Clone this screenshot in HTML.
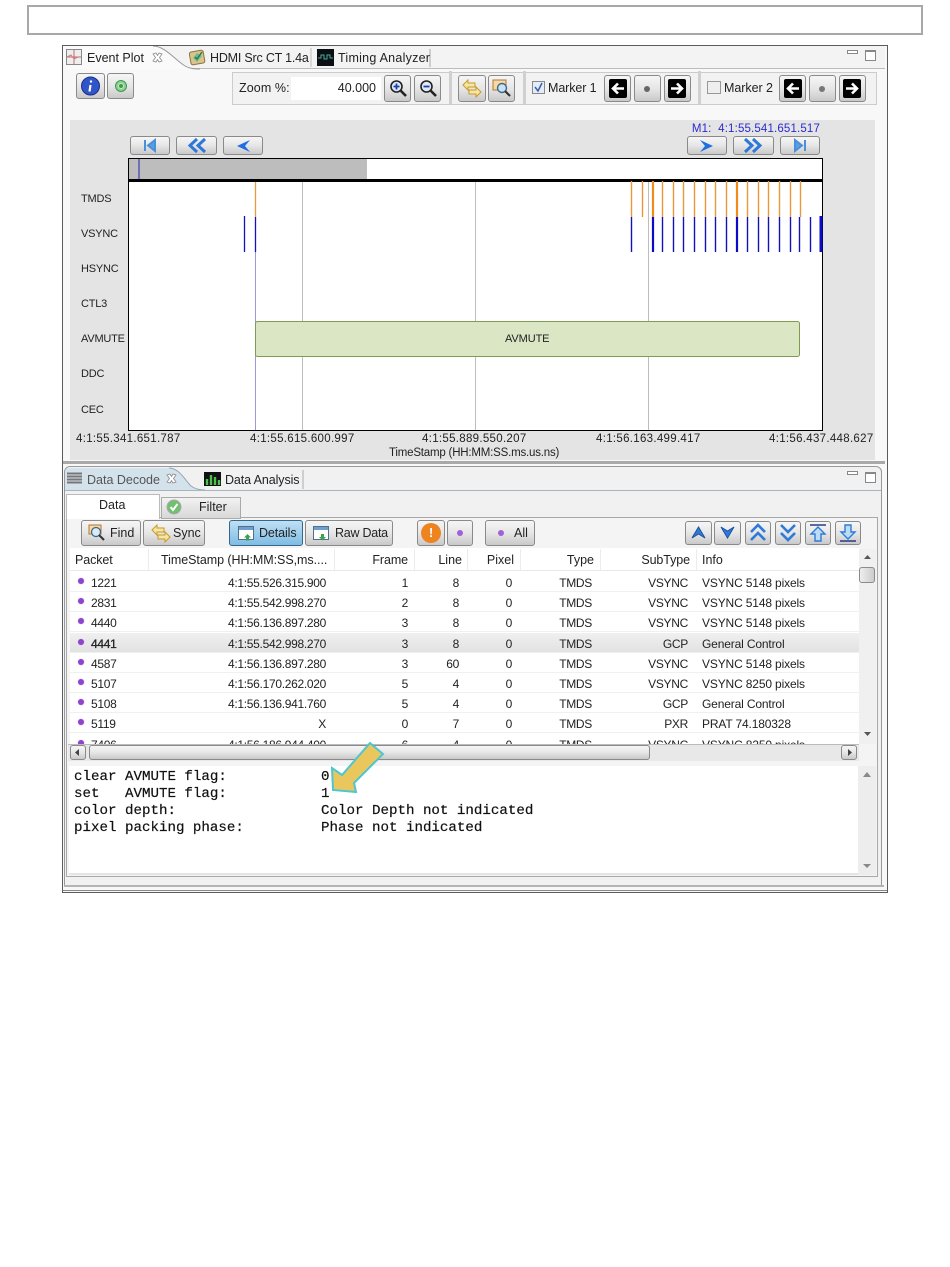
<!DOCTYPE html>
<html><head><meta charset="utf-8"><style>
html,body{margin:0;padding:0;background:#fff}
#p{position:relative;width:950px;height:1267px;overflow:hidden;font:12.5px "Liberation Sans",sans-serif;color:#222;background:#fff}
#p div,#p span,#p svg{position:absolute}
.t{white-space:nowrap;line-height:16px;height:16px}
.b{box-sizing:border-box;border:1px solid #8a8a8a;border-radius:3px;background:linear-gradient(#f6f6f6,#e6e6e6 50%,#c9c9c9)}
.ax{font-size:11.5px;letter-spacing:.3px;top:431px}
.yl{font-size:11px;left:81px;letter-spacing:-.2px}
.r{left:70px;width:789px;height:20.2px;border-bottom:1px solid #eef0f2;box-sizing:border-box;line-height:20px;white-space:nowrap;font-size:12px;letter-spacing:-.3px}
.r span{top:3px;line-height:16px}
.d{left:8px;top:6px!important;width:6px;height:6px;border-radius:50%;background:#8e44d0;box-shadow:0 0 1px #a8c}
.n{left:21px}.a{right:533px}.f{right:451px}.l{right:400px}.x{right:347px}.y{right:267px}.s{right:171px}.i{left:632px;letter-spacing:-.15px}
.sel{background:linear-gradient(#f0f0f0,#e2e2e2)}
.h{top:552px}
.m{font:14.17px/17px "Liberation Mono",monospace;color:#111;white-space:pre;-webkit-text-stroke:.2px #111}
.sep{top:71px;height:33px;width:3px;background:#d0d0d0}
.v{top:549px;width:1px;height:21px;background:#ececec}
</style></head><body><div id="p">
<div style="left:27px;top:5px;width:892px;height:26px;border:2px solid #a8a8a8"></div>

<div style="left:62px;top:45px;width:824px;height:846px;border:1px solid #5c5c5c;background:#f8f8f8"></div>
<div style="left:63px;top:46px;width:822px;height:22px;background:#f3f3f3;border-bottom:1px solid #bbb"></div>
<svg style="left:63px;top:46px" width="380" height="24"><path d="M0 0H90C102 0 112 14 122 20C127 23 132 23 137 23H0Z" fill="#fafafa"/><path d="M90 0C102 0 112 14 122 20C127 23 132 23 137 23" fill="none" stroke="#999"/><path d="M367 3V21" stroke="#aaa"/><path d="M248 2V21" stroke="#bbb"/></svg>
<svg style="left:66px;top:49px" width="17" height="17"><rect x=".5" y=".5" width="15" height="15" fill="#eee" stroke="#888"/><path d="M1 8H15M8 1V15" stroke="#c66"/><path d="M1 8L5 6L8 10L12 8" fill="none" stroke="#b88"/></svg>
<span class="t" style="left:87px;top:50px">Event Plot</span>
<svg style="left:152px;top:52px" width="11" height="11"><path d="M1 2L4 1L5.500 3.500L7 1L10 2L7.500 5.500L10 9L7 10L5.500 7.500L4 10L1 9L3.500 5.500Z" fill="#fff" stroke="#888" stroke-width=".8"/></svg>
<svg style="left:188px;top:49px" width="19" height="17"><rect x="2" y="2" width="14" height="13" rx="2" fill="#d9c58a" stroke="#8a7440" transform="rotate(-10 9 8)"/><path d="M5 9L9 4L14 7L9 13Z" fill="#6fb8a0"/><path d="M7 8L9 10L14 3" fill="none" stroke="#2b7d3a" stroke-width="1.500"/></svg>
<span class="t" style="left:210px;top:50px;letter-spacing:-.2px">HDMI Src CT 1.4a</span>
<div style="left:317px;top:49px;width:17px;height:17px;background:#0a0f14"></div>
<svg style="left:317px;top:49px" width="17" height="17"><path d="M1 9H4V6H7V10H10V6H13V9H16" fill="none" stroke="#4fa7a0"/></svg>
<span class="t" style="left:338px;top:50px;letter-spacing:.25px">Timing Analyzer</span>
<div style="left:847px;top:50px;width:9px;height:2px;border:1px solid #888;background:#fff"></div>
<div style="left:865px;top:50px;width:9px;height:8px;border:1px solid #888;border-top-width:2px;background:#fff"></div>

<div class="b" style="left:76px;top:73px;width:29px;height:26px"></div>
<svg style="left:80px;top:76px" width="21" height="20"><ellipse cx="10.500" cy="10" rx="9" ry="9" fill="#2f55c8" stroke="#1b2f86"/><path d="M11 4.500V6.500M10.500 9L9.500 15.500" stroke="#fff" stroke-width="2.200"/></svg>
<div class="b" style="left:107px;top:73px;width:27px;height:26px"></div>
<svg style="left:114px;top:79px" width="14" height="14"><circle cx="7" cy="7" r="5.500" fill="#8fcf8f" stroke="#3f9a4f"/><circle cx="7" cy="7" r="2.500" fill="#3f9a4f" stroke="#c6e8c6"/></svg>

<div style="left:232px;top:72px;width:643px;height:31px;border:1px solid #ccc;background:#f2f2f2"></div>
<span class="t" style="left:239px;top:80px;letter-spacing:.1px">Zoom %:</span>
<div style="left:291px;top:77px;width:90px;height:23px;background:#fff"></div>
<span class="t" style="right:574px;top:80px">40.000</span>
<div class="b" style="left:384px;top:75px;width:27px;height:27px"></div>
<svg style="left:388px;top:78px" width="20" height="20"><circle cx="8.500" cy="8.500" r="5.500" fill="#dfe9f6" stroke="#222" stroke-width="1.600"/><path d="M12.500 12.500L18 18" stroke="#222" stroke-width="2.600"/><path d="M5.500 8.500H11.500M8.500 5.500V11.500" stroke="#1c3cb0" stroke-width="1.800"/></svg>
<div class="b" style="left:414px;top:75px;width:27px;height:27px"></div>
<svg style="left:418px;top:78px" width="20" height="20"><circle cx="8.500" cy="8.500" r="5.500" fill="#dfe9f6" stroke="#222" stroke-width="1.600"/><path d="M12.500 12.500L18 18" stroke="#222" stroke-width="2.600"/><path d="M5.500 8.500H11.500" stroke="#1c3cb0" stroke-width="1.800"/></svg>
<div class="sep" style="left:449px"></div>
<div class="b" style="left:458px;top:75px;width:28px;height:27px"></div>
<svg style="left:462px;top:79px" width="20" height="20"><path d="M1 6L6 1V4H13V8H6V11Z" fill="#f7e6a0" stroke="#c89a2a"/><path d="M19 13L14 8V11H7V15H14V18Z" fill="#f7e6a0" stroke="#c89a2a"/></svg>
<div class="b" style="left:488px;top:75px;width:27px;height:27px"></div>
<svg style="left:492px;top:78px" width="20" height="20"><rect x="1" y="2" width="13" height="10" fill="#f6d9a8" stroke="#b8742a"/><circle cx="10" cy="10" r="4.500" fill="#c9e2f4" stroke="#3a6a8a" stroke-width="1.400"/><path d="M13 13L18 18" stroke="#333" stroke-width="2.200"/></svg>
<div class="sep" style="left:523px"></div>
<div style="left:532px;top:81px;width:11px;height:11px;border:1px solid #888;background:#e4ecf8"></div>
<svg style="left:533px;top:82px" width="11" height="11"><path d="M2 5L5 9L9 1" fill="none" stroke="#3a5ea8" stroke-width="1.500"/></svg>
<span class="t" style="left:548px;top:80px;letter-spacing:-.1px">Marker 1</span>
<div class="b" style="left:604px;top:75px;width:27px;height:27px"></div>
<div style="left:609px;top:79px;width:18px;height:19px;background:#000;border-radius:2px"></div>
<svg style="left:609px;top:79px" width="18" height="19"><path d="M15 9.500H5M9 4.500L4 9.500L9 14.500" fill="none" stroke="#fff" stroke-width="2.600"/></svg>
<div class="b" style="left:634px;top:75px;width:27px;height:27px"></div>
<div style="left:644px;top:86px;width:6px;height:6px;border-radius:50%;background:#666"></div>
<div class="b" style="left:664px;top:75px;width:27px;height:27px"></div>
<div style="left:668px;top:79px;width:18px;height:19px;background:#000;border-radius:2px"></div>
<svg style="left:668px;top:79px" width="18" height="19"><path d="M3 9.500H13M9 4.500L14 9.500L9 14.500" fill="none" stroke="#fff" stroke-width="2.600"/></svg>
<div class="sep" style="left:698px"></div>
<div style="left:707px;top:81px;width:12px;height:11px;border:1px solid #999;background:#eee"></div>
<span class="t" style="left:724px;top:80px;letter-spacing:-.05px">Marker 2</span>
<div class="b" style="left:779px;top:75px;width:27px;height:27px"></div>
<div style="left:784px;top:79px;width:18px;height:19px;background:#000;border-radius:2px"></div>
<svg style="left:784px;top:79px" width="18" height="19"><path d="M15 9.500H5M9 4.500L4 9.500L9 14.500" fill="none" stroke="#fff" stroke-width="2.600"/></svg>
<div class="b" style="left:809px;top:75px;width:27px;height:27px"></div>
<div style="left:819px;top:86px;width:6px;height:6px;border-radius:50%;background:#777"></div>
<div class="b" style="left:839px;top:75px;width:27px;height:27px"></div>
<div style="left:843px;top:79px;width:18px;height:19px;background:#000;border-radius:2px"></div>
<svg style="left:843px;top:79px" width="18" height="19"><path d="M3 9.500H13M9 4.500L14 9.500L9 14.500" fill="none" stroke="#fff" stroke-width="2.600"/></svg>

<div style="left:70px;top:120px;width:805px;height:340px;background:#e4e4e4"></div>
<div style="left:63px;top:461px;width:822px;height:3px;background:#a9a9a9"></div>
<span class="t" style="right:130px;top:121px;font-size:11.5px;color:#2a2ad0;letter-spacing:.15px">M1:&nbsp; 4:1:55.541.651.517</span>

<div class="b" style="left:130px;top:136px;width:40px;height:19px"></div>
<svg style="left:130px;top:136px" width="40" height="19"><path d="M15 4V15M25 4L18 9.500L25 15V4Z" stroke="#4b8fd8" stroke-width="2" fill="#5a9fe0"/></svg>
<div class="b" style="left:176px;top:136px;width:41px;height:19px"></div>
<svg style="left:176px;top:136px" width="41" height="19"><path d="M21 3L14 9.500L21 16M29 3L22 9.500L29 16" fill="none" stroke="#2d78d8" stroke-width="3"/></svg>
<div class="b" style="left:223px;top:136px;width:40px;height:19px"></div>
<svg style="left:223px;top:136px" width="40" height="19"><path d="M27 4L14 10L27 16L22 10Z" fill="#1f6fe0"/></svg>
<div class="b" style="left:687px;top:136px;width:40px;height:19px"></div>
<svg style="left:687px;top:136px" width="40" height="19"><path d="M13 4L26 10L13 16L18 10Z" fill="#1f6fe0"/></svg>
<div class="b" style="left:733px;top:136px;width:41px;height:19px"></div>
<svg style="left:733px;top:136px" width="41" height="19"><path d="M12 3L19 9.500L12 16M20 3L27 9.500L20 16" fill="none" stroke="#2d78d8" stroke-width="3"/></svg>
<div class="b" style="left:780px;top:136px;width:40px;height:19px"></div>
<svg style="left:780px;top:136px" width="40" height="19"><path d="M25 4V15M15 4L22 9.500L15 15V4Z" stroke="#4b8fd8" stroke-width="2" fill="#5a9fe0"/></svg>

<svg style="left:0;top:0" width="950" height="440">
<rect x="128.500" y="158.500" width="694" height="272" fill="#fff" stroke="#000"/>
<rect x="129" y="159" width="238" height="20" fill="#bdbdbd"/>
<path d="M139 159V179" stroke="#2323b0"/>
<rect x="129" y="179" width="693" height="3" fill="#000"/>
<path d="M302.500 182V430M475.500 182V430M648.500 182V430" stroke="#bdbdbd"/>
<path d="M255.500 182V217" stroke="#e89a40" stroke-width="1.300"/>
<path d="M255.500 217V252M244.500 216V252" stroke="#1212b8" stroke-width="1.300"/>
<path d="M255.500 252V430" stroke="#9a9ad8"/>
<path d="M631.500 181V217M642.500 181V217M662.500 181V217M673.500 181V217M683.500 181V217M694.500 181V217M705.500 181V217M715.500 181V217M726.500 181V217M747.500 181V217M758.500 181V217M768.500 181V217M779.500 181V217M790.500 181V217M800.500 181V217" stroke="#e8983a" stroke-width="1.400"/>
<path d="M653 181V217M737 181V217" stroke="#f08a1c" stroke-width="2.200"/>
<path d="M631.500 217V252M662.500 217V252M673.500 217V252M683.500 217V252M694.500 217V252M705.500 217V252M715.500 217V252M726.500 217V252M747.500 217V252M758.500 217V252M768.500 217V252M779.500 217V252M790.500 217V252M799.500 217V252M810.500 217V252" stroke="#1212b8" stroke-width="1.400"/>
<path d="M653 217V252M737 217V252" stroke="#0c0cc8" stroke-width="2.200"/>
<path d="M821 216V252" stroke="#0c0cc8" stroke-width="3"/>
<rect x="255.500" y="321.500" width="544" height="35" rx="2" fill="#dbe6c5" stroke="#7f9c50"/>
</svg>
<span class="t" style="left:505px;top:331px;font-size:11px;letter-spacing:-.1px">AVMUTE</span>
<span class="t yl" style="top:191px">TMDS</span>
<span class="t yl" style="top:226px">VSYNC</span>
<span class="t yl" style="top:261px">HSYNC</span>
<span class="t yl" style="top:296px">CTL3</span>
<span class="t yl" style="top:331px">AVMUTE</span>
<span class="t yl" style="top:366px">DDC</span>
<span class="t yl" style="top:402px">CEC</span>
<span class="t ax" style="left:76px">4:1:55.341.651.787</span>
<span class="t ax" style="left:250px">4:1:55.615.600.997</span>
<span class="t ax" style="left:422px">4:1:55.889.550.207</span>
<span class="t ax" style="left:596px">4:1:56.163.499.417</span>
<span class="t ax" style="left:769px">4:1:56.437.448.627</span>
<span class="t" style="left:389px;top:445px;font-size:11.5px;letter-spacing:-.2px">TimeStamp (HH:MM:SS.ms.us.ns)</span>

<div style="left:64px;top:466px;width:818px;height:420px;border:1px solid #999;box-sizing:border-box;border-radius:6px 6px 0 0;background:#f1f1f1"></div>
<svg style="left:65px;top:467px" width="245" height="24"><path d="M0 22V6Q0 1 6 1H104C114 1 120 13 126 19C130 22 134 23 140 23H0Z" fill="#d4e2ec"/><path d="M104 1C114 1 120 13 126 19C130 22 134 23 140 23" fill="none" stroke="#92a8b8"/><path d="M238 3V22" stroke="#aaa"/></svg>
<div style="left:65px;top:490px;width:816px;height:1px;background:#a9b4bc"></div>
<svg style="left:67px;top:472px" width="16" height="14"><path d="M0 1.500H15M0 4.500H15M0 7.500H15M0 10.500H15" stroke="#777" stroke-width="2"/></svg>
<span class="t" style="left:87px;top:472px;color:#555">Data Decode</span>
<svg style="left:166px;top:473px" width="11" height="11"><path d="M1 2L4 1L5.500 3.500L7 1L10 2L7.500 5.500L10 9L7 10L5.500 7.500L4 10L1 9L3.500 5.500Z" fill="#fff" stroke="#888" stroke-width=".8"/></svg>
<svg style="left:204px;top:472px" width="17" height="14"><rect width="17" height="14" fill="#111"/><path d="M3 13V7M7 13V3M11 13V5M15 13V8" stroke="#4ec04e" stroke-width="2.400"/></svg>
<span class="t" style="left:225px;top:472px;letter-spacing:-.1px">Data Analysis</span>
<div style="left:847px;top:471px;width:9px;height:2px;border:1px solid #888;background:#fff"></div>
<div style="left:865px;top:472px;width:9px;height:8px;border:1px solid #888;border-top-width:2px;background:#fff"></div>

<div style="left:66px;top:517px;width:810px;height:358px;border:1px solid #a8a8a8;background:#f4f4f4"></div>
<div style="left:161px;top:497px;width:78px;height:20px;border:1px solid #aaa;box-sizing:content-box;background:linear-gradient(#f2f2f2,#d8d8d8)"></div>
<div style="left:66px;top:494px;width:94px;height:25px;background:#fff;border:1px solid #bbb;border-bottom:0;box-sizing:border-box"></div>
<span class="t" style="left:99px;top:497px">Data</span>
<svg style="left:166px;top:499px" width="16" height="16"><circle cx="8" cy="8" r="7" fill="#6fc06f" stroke="#aaa"/><path d="M4.500 8L7 11L11.500 5" fill="none" stroke="#fff" stroke-width="2"/></svg>
<span class="t" style="left:199px;top:499px">Filter</span>

<div class="b" style="left:81px;top:520px;width:60px;height:26px"></div>
<svg style="left:88px;top:524px" width="18" height="18"><rect x="1" y="1" width="12" height="9" fill="#f6d9a8" stroke="#b8742a"/><circle cx="8" cy="8" r="4.500" fill="#dceaf4" stroke="#3a6a8a" stroke-width="1.300"/><path d="M11 11L16 16" stroke="#333" stroke-width="2"/></svg>
<span class="t" style="left:110px;top:525px">Find</span>
<div class="b" style="left:143px;top:520px;width:62px;height:26px"></div>
<svg style="left:151px;top:524px" width="20" height="19"><path d="M1 6L6 1V4H13V8H6V11Z" fill="#f7e6a0" stroke="#c89a2a"/><path d="M19 13L14 8V11H7V15H14V18Z" fill="#f7e6a0" stroke="#c89a2a"/></svg>
<span class="t" style="left:173px;top:525px">Sync</span>
<div class="b" style="left:229px;top:520px;width:74px;height:26px;background:linear-gradient(#bfe0f4,#7fbce4);border-color:#36668a"></div>
<svg style="left:238px;top:526px" width="18" height="16"><rect x=".5" y=".5" width="15" height="13" fill="#fff" stroke="#50708c"/><rect x="1" y="1" width="14" height="3" fill="#6f9fd0"/><path d="M9.500 8L13 11.500H11V14.500H8V11.500H6Z" fill="#3fa04f"/></svg>
<span class="t" style="left:259px;top:525px;letter-spacing:-.1px">Details</span>
<div class="b" style="left:305px;top:520px;width:88px;height:26px"></div>
<svg style="left:313px;top:526px" width="18" height="16"><rect x=".5" y=".5" width="15" height="13" fill="#fff" stroke="#50708c"/><rect x="1" y="1" width="14" height="3" fill="#6f9fd0"/><path d="M8 8H11V11H13L9.500 14.500L6 11H8Z" fill="#3fa04f"/></svg>
<span class="t" style="left:335px;top:525px;letter-spacing:-.25px">Raw Data</span>
<div class="b" style="left:417px;top:520px;width:28px;height:26px"></div>
<div style="left:421px;top:523px;width:20px;height:20px;border-radius:50%;background:#ee8420"></div>
<span class="t" style="left:429px;top:525px;color:#fff;font-weight:bold">!</span>
<div class="b" style="left:447px;top:520px;width:26px;height:26px"></div>
<div style="left:457px;top:530px;width:6px;height:6px;border-radius:50%;background:#a060d8"></div>
<div class="b" style="left:485px;top:520px;width:50px;height:26px"></div>
<div style="left:498px;top:530px;width:6px;height:6px;border-radius:50%;background:#a060d8"></div>
<span class="t" style="left:514px;top:525px">All</span>

<div class="b" style="left:685px;top:521px;width:27px;height:24px"></div>
<svg style="left:685px;top:521px" width="27" height="24"><path d="M7 17L13.500 6L20 17L13.500 13Z" fill="#2e7ad8" stroke="#1e50a0"/></svg>
<div class="b" style="left:714px;top:521px;width:27px;height:24px"></div>
<svg style="left:714px;top:521px" width="27" height="24"><path d="M7 6L13.500 17L20 6L13.500 10Z" fill="#2e7ad8" stroke="#1e50a0"/></svg>
<div class="b" style="left:745px;top:521px;width:26px;height:24px"></div>
<svg style="left:745px;top:521px" width="26" height="24"><path d="M6 11L13 4L20 11M6 19L13 12L20 19" fill="none" stroke="#2e7ad8" stroke-width="2.600"/></svg>
<div class="b" style="left:775px;top:521px;width:26px;height:24px"></div>
<svg style="left:775px;top:521px" width="26" height="24"><path d="M6 4L13 11L20 4M6 12L13 19L20 12" fill="none" stroke="#2e7ad8" stroke-width="2.600"/></svg>
<div class="b" style="left:805px;top:521px;width:26px;height:24px"></div>
<svg style="left:805px;top:521px" width="26" height="24"><path d="M5 4H21" stroke="#1a2f80" stroke-width="1.400"/><path d="M13 6L20 13H16V20H10V13H6Z" fill="#bcdcf6" stroke="#2e7ad8" stroke-width="1.400"/></svg>
<div class="b" style="left:835px;top:521px;width:26px;height:24px"></div>
<svg style="left:835px;top:521px" width="26" height="24"><path d="M5 20H21" stroke="#1a2f80" stroke-width="1.400"/><path d="M13 18L20 11H16V4H10V11H6Z" fill="#bcdcf6" stroke="#2e7ad8" stroke-width="1.400"/></svg>

<div style="left:70px;top:548px;width:789px;height:196px;background:#fff"></div>
<div class="v" style="left:148px"></div><div class="v" style="left:334px"></div><div class="v" style="left:414px"></div><div class="v" style="left:467px"></div><div class="v" style="left:520px"></div><div class="v" style="left:600px"></div><div class="v" style="left:696px"></div>
<div style="left:70px;top:570px;width:789px;height:1px;background:#e8e8e8"></div>
<span class="t h" style="left:75px;letter-spacing:-.1px">Packet</span>
<span class="t h" style="left:161px;letter-spacing:-.05px">TimeStamp (HH:MM:SS,ms....</span>
<span class="t h" style="right:542px;letter-spacing:-.1px">Frame</span>
<span class="t h" style="right:488px">Line</span>
<span class="t h" style="right:436px">Pixel</span>
<span class="t h" style="right:356px">Type</span>
<span class="t h" style="right:260px;letter-spacing:-.1px">SubType</span>
<span class="t h" style="left:702px">Info</span>

<div style="left:70px;top:571px;width:789px;height:173px;overflow:hidden">
<div class="r" style="left:0;top:1px"><span class="d"></span><span class="n">1221</span><span class="a">4:1:55.526.315.900</span><span class="f">1</span><span class="l">8</span><span class="x">0</span><span class="y">TMDS</span><span class="s">VSYNC</span><span class="i">VSYNC 5148 pixels</span></div>
<div class="r" style="left:0;top:21px"><span class="d"></span><span class="n">2831</span><span class="a">4:1:55.542.998.270</span><span class="f">2</span><span class="l">8</span><span class="x">0</span><span class="y">TMDS</span><span class="s">VSYNC</span><span class="i">VSYNC 5148 pixels</span></div>
<div class="r" style="left:0;top:41px"><span class="d"></span><span class="n">4440</span><span class="a">4:1:56.136.897.280</span><span class="f">3</span><span class="l">8</span><span class="x">0</span><span class="y">TMDS</span><span class="s">VSYNC</span><span class="i">VSYNC 5148 pixels</span></div>
<div class="r sel" style="left:0;top:62px"><span class="d"></span><span class="n"><b style="font-weight:normal;-webkit-text-stroke:.3px #222">4441</b></span><span class="a">4:1:55.542.998.270</span><span class="f">3</span><span class="l">8</span><span class="x">0</span><span class="y">TMDS</span><span class="s">GCP</span><span class="i">General Control</span></div>
<div class="r" style="left:0;top:82px"><span class="d"></span><span class="n">4587</span><span class="a">4:1:56.136.897.280</span><span class="f">3</span><span class="l">60</span><span class="x">0</span><span class="y">TMDS</span><span class="s">VSYNC</span><span class="i">VSYNC 5148 pixels</span></div>
<div class="r" style="left:0;top:102px"><span class="d"></span><span class="n">5107</span><span class="a">4:1:56.170.262.020</span><span class="f">5</span><span class="l">4</span><span class="x">0</span><span class="y">TMDS</span><span class="s">VSYNC</span><span class="i">VSYNC 8250 pixels</span></div>
<div class="r" style="left:0;top:122px"><span class="d"></span><span class="n">5108</span><span class="a">4:1:56.136.941.760</span><span class="f">5</span><span class="l">4</span><span class="x">0</span><span class="y">TMDS</span><span class="s">GCP</span><span class="i">General Control</span></div>
<div class="r" style="left:0;top:142px"><span class="d"></span><span class="n">5119</span><span class="a">X</span><span class="f">0</span><span class="l">7</span><span class="x">0</span><span class="y">TMDS</span><span class="s">PXR</span><span class="i">PRAT 74.180328</span></div>
<div class="r" style="left:0;top:163px"><span class="d"></span><span class="n">7406</span><span class="a">4:1:56.186.944.400</span><span class="f">6</span><span class="l">4</span><span class="x">0</span><span class="y">TMDS</span><span class="s">VSYNC</span><span class="i">VSYNC 8250 pixels</span></div>
</div>

<div style="left:859px;top:549px;width:17px;height:195px;background:#f0f0f0"></div>
<svg style="left:859px;top:550px" width="17" height="190"><path d="M5 9L8.500 5L12 9Z" fill="#555"/><path d="M5 182L8.500 186L12 182Z" fill="#555"/></svg>
<div class="b" style="left:859px;top:567px;width:16px;height:16px;background:linear-gradient(90deg,#eee,#ccc)"></div>

<div style="left:68px;top:744px;width:791px;height:17px;background:#e8e8e8;border-top:1px solid #bbb;box-sizing:border-box"></div>
<div class="b" style="left:70px;top:745px;width:16px;height:15px"></div>
<svg style="left:70px;top:745px" width="16" height="15"><path d="M9 4L5 7.500L9 11Z" fill="#444"/></svg>
<div class="b" style="left:89px;top:745px;width:561px;height:15px"></div>
<div class="b" style="left:841px;top:745px;width:16px;height:15px"></div>
<svg style="left:841px;top:745px" width="16" height="15"><path d="M7 4L11 7.500L7 11Z" fill="#444"/></svg>

<div style="left:69px;top:766px;width:789px;height:109px;background:#fff"></div>
<div style="left:69px;top:873px;width:789px;height:2px;background:#e4e4e4"></div>
<div style="left:858px;top:766px;width:18px;height:109px;background:#ededed"></div>
<svg style="left:858px;top:766px" width="18" height="109"><path d="M5 11L9 6L13 11Z" fill="#888"/><path d="M5 98L9 102L13 98Z" fill="#888"/></svg>

<span class="m" style="left:74px;top:769px">clear AVMUTE flag:</span><span class="m" style="left:321px;top:769px">0</span>
<span class="m" style="left:74px;top:786px">set   AVMUTE flag:</span><span class="m" style="left:321px;top:786px">1</span>
<span class="m" style="left:74px;top:803px">color depth:</span><span class="m" style="left:321px;top:803px">Color Depth not indicated</span>
<span class="m" style="left:74px;top:820px">pixel packing phase:</span><span class="m" style="left:321px;top:820px">Phase not indicated</span>

<svg style="left:325px;top:736px" width="65" height="62"><path d="M45 7L58 18L29 47L31 56L8 54L7 32L17 39Z" fill="#eac75c" stroke="#4cc6d2" stroke-width="2"/></svg>

<div style="left:64px;top:885px;width:820px;height:2px;background:#b4b4b4"></div>
<div style="left:63px;top:890px;width:824px;height:1px;background:#8a8a8a"></div>
</div></body></html>
